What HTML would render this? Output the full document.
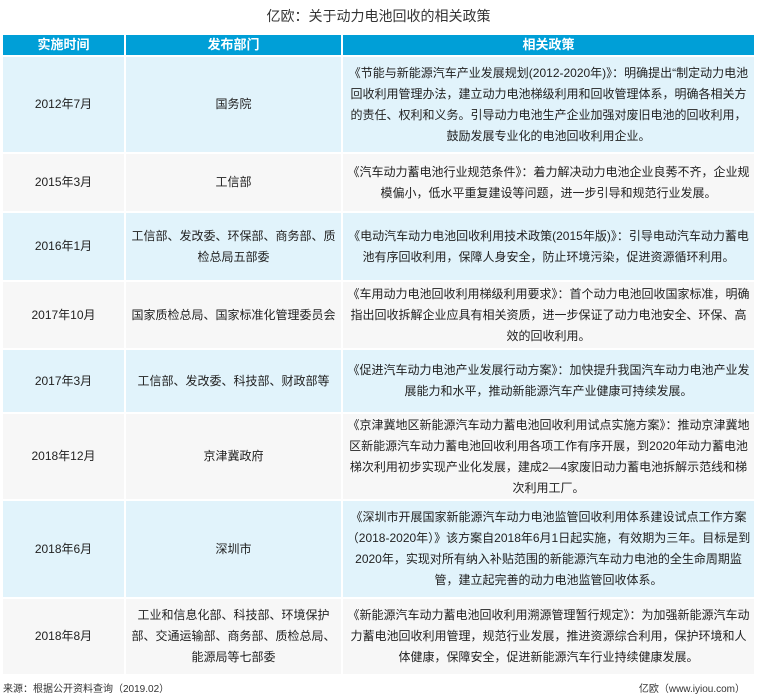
<!DOCTYPE html>
<html><head><meta charset="utf-8"><style>
body{margin:0;width:757px;height:698px;background:#fff;font-family:"Liberation Sans","Noto Sans CJK SC",sans-serif;color:#222;overflow:hidden;position:relative}
.title{position:absolute;top:6px;left:0;width:757px;text-align:center;font-size:14px;color:#333}
table{position:absolute;left:1px;top:33px;width:755px;border-collapse:collapse;table-layout:fixed;font-size:12px}
td,th{border:2px solid #fff;text-align:center;vertical-align:middle;padding:0 3px;line-height:21px;overflow:hidden}
th{background:#009fd7;color:#fff;height:20px;font-size:13px;font-weight:bold;line-height:20px}
tr.b td{background:#e1f3fb}
tr.g td{background:#f7f7f7}
.foot{position:absolute;top:680px;font-size:10px;color:#333}
</style></head><body>
<div class="title">亿欧：关于动力电池回收的相关政策</div>
<table>
<colgroup><col style="width:123px"><col style="width:217px"><col></colgroup>
<tr><th>实施时间</th><th>发布部门</th><th>相关政策</th></tr>
<tr class="b" style="height:97px"><td>2012年7月</td><td>国务院</td><td>《节能与新能源汽车产业发展规划(2012-2020年)》：明确提出“制定动力电池回收利用管理办法，建立动力电池梯级利用和回收管理体系，明确各相关方的责任、权利和义务。引导动力电池生产企业加强对废旧电池的回收利用，鼓励发展专业化的电池回收利用企业。</td></tr>
<tr class="g" style="height:59px"><td>2015年3月</td><td>工信部</td><td>《汽车动力蓄电池行业规范条件》：着力解决动力电池企业良莠不齐，企业规模偏小，低水平重复建设等问题，进一步引导和规范行业发展。</td></tr>
<tr class="b" style="height:69px"><td>2016年1月</td><td>工信部、发改委、环保部、商务部、质检总局五部委</td><td>《电动汽车动力电池回收利用技术政策(2015年版)》：引导电动汽车动力蓄电池有序回收利用，保障人身安全，防止环境污染，促进资源循环利用。</td></tr>
<tr class="g" style="height:68px"><td>2017年10月</td><td style="padding:0">国家质检总局、国家标准化管理委员会</td><td>《车用动力电池回收利用梯级利用要求》：首个动力电池回收国家标准，明确指出回收拆解企业应具有相关资质，进一步保证了动力电池安全、环保、高效的回收利用。</td></tr>
<tr class="b" style="height:64px"><td>2017年3月</td><td>工信部、发改委、科技部、财政部等</td><td>《促进汽车动力电池产业发展行动方案》：加快提升我国汽车动力电池产业发展能力和水平，推动新能源汽车产业健康可持续发展。</td></tr>
<tr class="g" style="height:87px"><td>2018年12月</td><td>京津冀政府</td><td>《京津冀地区新能源汽车动力蓄电池回收利用试点实施方案》：推动京津冀地区新能源汽车动力蓄电池回收利用各项工作有序开展，到2020年动力蓄电池梯次利用初步实现产业化发展，建成2—4家废旧动力蓄电池拆解示范线和梯次利用工厂。</td></tr>
<tr class="b" style="height:98px"><td>2018年6月</td><td>深圳市</td><td>《深圳市开展国家新能源汽车动力电池监管回收利用体系建设试点工作方案（2018-2020年）》该方案自2018年6月1日起实施，有效期为三年。目标是到2020年，实现对所有纳入补贴范围的新能源汽车动力电池的全生命周期监管，建立起完善的动力电池监管回收体系。</td></tr>
<tr class="g" style="height:77px"><td>2018年8月</td><td>工业和信息化部、科技部、环境保护部、交通运输部、商务部、质检总局、能源局等七部委</td><td>《新能源汽车动力蓄电池回收利用溯源管理暂行规定》：为加强新能源汽车动力蓄电池回收利用管理，规范行业发展，推进资源综合利用，保护环境和人体健康，保障安全，促进新能源汽车行业持续健康发展。</td></tr>
</table>
<div class="foot" style="left:3px">来源：根据公开资料查询（2019.02）</div>
<div class="foot" style="right:12px">亿欧（www.iyiou.com）</div>
</body></html>
